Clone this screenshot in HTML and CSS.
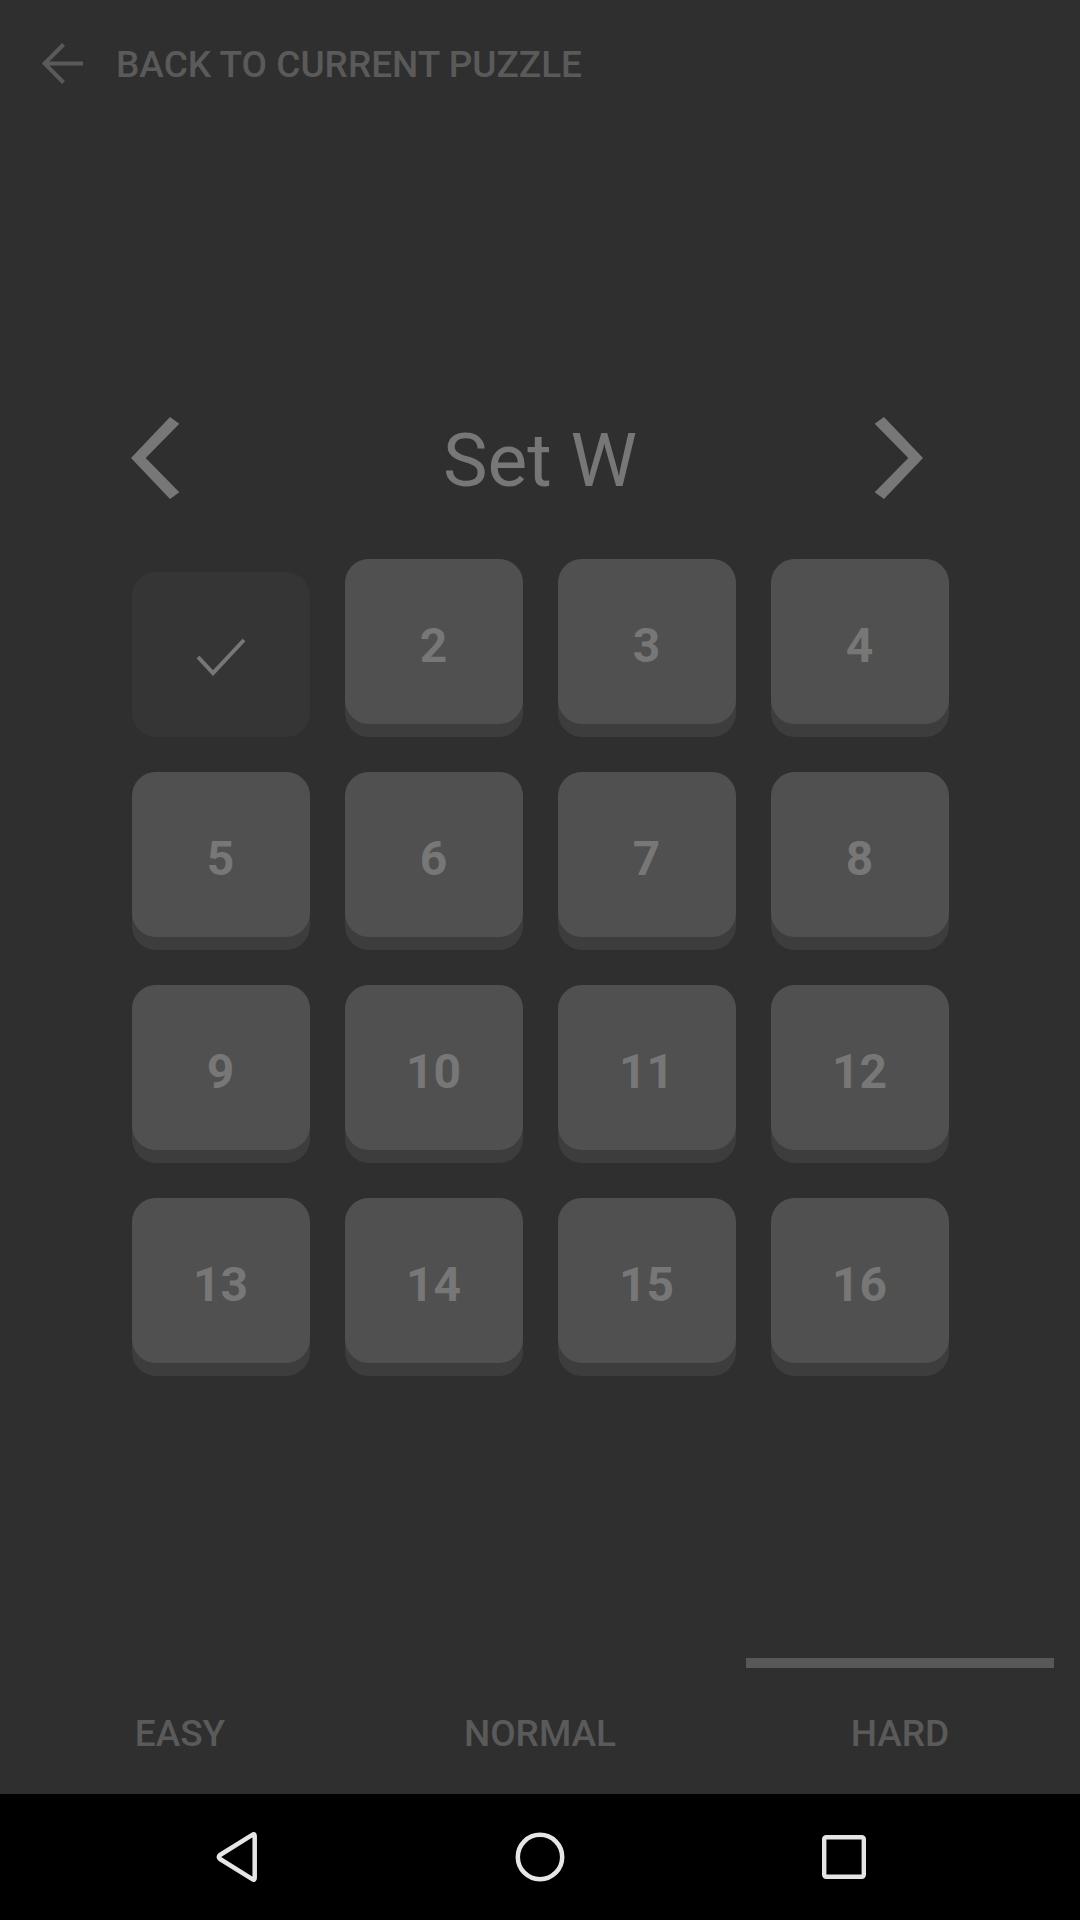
FILE: index.html
```html
<!DOCTYPE html>
<html>
<head>
<meta charset="utf-8">
<link rel="stylesheet" href="styles.css">
</head>
<body>
<div class="app">
  <header class="topbar">
    <svg class="back-arrow" width="41" height="41" viewBox="0 0 41 41">
      <path d="M21.5 1.5 L2.5 20.5 L21.5 39.5 M2.5 20.5 H41" fill="none" stroke="#5a5a5a" stroke-width="4"/>
    </svg>
    <span class="back-text">BACK TO CURRENT PUZZLE</span>
  </header>

  <main class="main">
    <div class="set-row">
      <div class="nav-left">
        <svg width="49" height="82" viewBox="0 0 49 82"><path d="M0 41 L39 0 L48.3 6.7 L14.7 41 L48.3 75.3 L39 82 Z" fill="#777"/></svg>
      </div>
      <div class="set-title">Set W</div>
      <div class="nav-right">
        <svg width="49" height="82" viewBox="0 0 49 82"><path d="M49 41 L10 0 L0.7 6.7 L34.3 41 L0.7 75.3 L10 82 Z" fill="#777"/></svg>
      </div>
    </div>

    <div class="grid">
      <div class="tile done"><div class="face">
        <svg width="178" height="165" viewBox="0 0 178 165"><path d="M66 85 L81 101 L112 68" fill="none" stroke="#777" stroke-width="4"/></svg>
      </div></div>
      <div class="tile"><div class="face">2</div></div>
      <div class="tile"><div class="face">3</div></div>
      <div class="tile"><div class="face">4</div></div>
      <div class="tile"><div class="face">5</div></div>
      <div class="tile"><div class="face">6</div></div>
      <div class="tile"><div class="face">7</div></div>
      <div class="tile"><div class="face">8</div></div>
      <div class="tile"><div class="face">9</div></div>
      <div class="tile"><div class="face">10</div></div>
      <div class="tile"><div class="face">11</div></div>
      <div class="tile"><div class="face">12</div></div>
      <div class="tile"><div class="face">13</div></div>
      <div class="tile"><div class="face">14</div></div>
      <div class="tile"><div class="face">15</div></div>
      <div class="tile"><div class="face">16</div></div>
    </div>
  </main>

  <div class="tabs">
    <div class="indicator"></div>
    <div class="tab-row">
      <div class="tab">EASY</div>
      <div class="tab">NORMAL</div>
      <div class="tab">HARD</div>
    </div>
  </div>

  <nav class="sysnav">
    <div class="navbtn">
      <svg width="60" height="60" viewBox="0 0 60 60"><path d="M48.7 9 L48.7 51 Q48.7 53.8 46.3 52.2 L14 32 Q11.6 30 14 28 L46.3 7.8 Q48.7 6.2 48.7 9 Z" fill="none" stroke="#e6e6e6" stroke-width="4.5" stroke-linejoin="round"/></svg>
    </div>
    <div class="navbtn">
      <svg width="60" height="60" viewBox="0 0 60 60"><circle cx="30" cy="30" r="22.2" fill="none" stroke="#e6e6e6" stroke-width="4.5"/></svg>
    </div>
    <div class="navbtn">
      <svg width="60" height="60" viewBox="0 0 60 60"><rect x="10.2" y="10.2" width="39.6" height="39.6" rx="2" fill="none" stroke="#e6e6e6" stroke-width="4.4"/></svg>
    </div>
  </nav>
</div>
</body>
</html>
```

FILE: styles.css
```css
html, body {
  margin: 0;
  padding: 0;
  background: #2f2f2f;
}

.app {
  width: 1080px;
  height: 1920px;
  display: flex;
  flex-direction: column;
  background: #2f2f2f;
  font-family: Roboto, "Liberation Sans", sans-serif;
}

.topbar {
  height: 126px;
  display: flex;
  align-items: center;
  padding-left: 42px;
  gap: 33px;
  flex-shrink: 0;
}

.back-arrow {
  display: block;
}

.back-text {
  color: #5a5a5a;
  font-size: 37px;
  font-weight: 500;
  line-height: 1;
  padding-top: 2px;
}

.main {
  flex: 1;
  display: flex;
  flex-direction: column;
  align-items: center;
}

.set-row {
  width: 1080px;
  margin-top: 289px;
  height: 82px;
  display: grid;
  grid-template-columns: 1fr auto 1fr;
  align-items: center;
}

.nav-left {
  justify-self: start;
  padding-left: 131px;
  display: flex;
}

.nav-right {
  justify-self: end;
  padding-right: 157px;
  display: flex;
}

.set-title {
  color: #777777;
  font-size: 75px;
  font-weight: 400;
  line-height: 82px;
  padding-top: 4px;
}

.grid {
  margin-top: 62px;
  display: grid;
  grid-template-columns: repeat(4, 178px);
  grid-auto-rows: 178px;
  gap: 35px;
}

.tile {
  border-radius: 24px;
  background: #3d3d3d;
}

.face {
  box-sizing: border-box;
  height: 165px;
  padding-top: 8px;
  border-radius: 24px;
  background: #505050;
  display: flex;
  align-items: center;
  justify-content: center;
  color: #777777;
  font-size: 48px;
  font-weight: 700;
  line-height: 1;
}

.tile.done {
  background: transparent;
  padding-top: 13px;
}

.tile.done .face {
  background: #353535;
  padding-top: 0;
}

.face svg {
  display: block;
}

.tabs {
  flex-shrink: 0;
}

.indicator {
  width: 308px;
  height: 10px;
  margin-left: 746px;
  background: #585858;
}

.tab-row {
  height: 126px;
  display: grid;
  grid-template-columns: repeat(3, 1fr);
  align-items: center;
}

.tab {
  text-align: center;
  color: #5a5a5a;
  font-size: 37px;
  font-weight: 500;
  line-height: 1;
  padding-top: 5px;
}

.sysnav {
  height: 126px;
  flex-shrink: 0;
  background: #000;
  display: flex;
  justify-content: center;
  align-items: center;
  gap: 244px;
}

.navbtn {
  width: 60px;
  height: 60px;
}

.navbtn svg {
  display: block;
}
```
